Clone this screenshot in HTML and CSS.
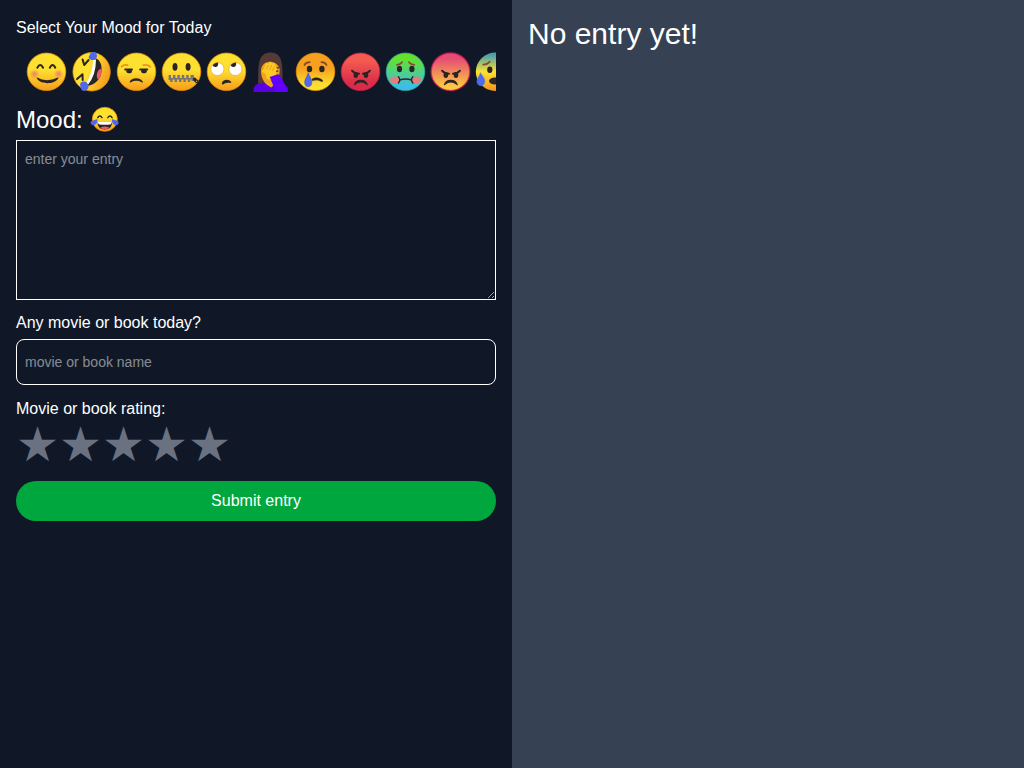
FILE: index.html
```html
<!DOCTYPE html>
<html lang="en">
<head>
<meta charset="utf-8">
<title>Mood Diary</title>
<link rel="stylesheet" href="styles.css">
</head>
<body>
<svg class="defs" aria-hidden="true">
  <defs>
    <linearGradient id="yellow" x1="0" y1="0" x2="0" y2="1"><stop offset=".45" stop-color="#fde030"/><stop offset="1" stop-color="#f79c1c"/></linearGradient>
    <linearGradient id="tilt" x1="0" y1=".2" x2="1" y2=".6"><stop offset=".45" stop-color="#fde030"/><stop offset="1" stop-color="#f39a1e"/></linearGradient>
    <linearGradient id="sad" x1="0" y1="0" x2="0" y2="1"><stop offset=".4" stop-color="#f5a01e"/><stop offset=".85" stop-color="#fde030"/></linearGradient>
    <linearGradient id="red" x1="0" y1="0" x2="0" y2="1"><stop offset=".2" stop-color="#f35b50"/><stop offset=".8" stop-color="#db2b4b"/></linearGradient>
    <linearGradient id="sick" x1="0" y1="0" x2="0" y2="1"><stop offset=".15" stop-color="#62e32b"/><stop offset=".9" stop-color="#3bbdea"/></linearGradient>
    <linearGradient id="angry" x1="0" y1="0" x2="0" y2="1"><stop offset=".15" stop-color="#e64d74"/><stop offset=".9" stop-color="#fcca3f"/></linearGradient>
    <linearGradient id="anxious" x1="0" y1="0" x2="0" y2="1"><stop offset=".05" stop-color="#489eae"/><stop offset=".5" stop-color="#fde030"/><stop offset="1" stop-color="#f7931e"/></linearGradient>
    <radialGradient id="blush"><stop offset=".2" stop-color="#f28b62"/><stop offset="1" stop-color="#f79c4c" stop-opacity="0"/></radialGradient>
    <g id="scowl">
      <g fill="#2c2424"><ellipse cx="17.8" cy="27" rx="2.3" ry="2.9"/><ellipse cx="28" cy="27" rx="2.3" ry="2.9"/></g>
      <path class="line" d="M14 22.7Q16.5 25.6 21 25.8M32 22.7Q29.5 25.6 25 25.8"/>
      <path fill="#2c2424" d="M15.8 37Q17 31.8 22.8 31.8T29.9 37Q29.5 37.7 28.5 36.7Q22.8 32.3 17.2 36.7Q16.2 37.7 15.8 37Z"/>
    </g>
  </defs>
</svg>
<main class="layout">
  <form class="form-panel">
    <label class="label">Select Your Mood for Today</label>
    <div class="moods">
      <svg viewBox="0 0 44.9 48" role="img" aria-label="smiling">
        <ellipse class="rim" cx="22.5" cy="23.8" rx="19.3" ry="18.8" fill="url(#yellow)"/>
        <circle cx="10.5" cy="26" r="5.2" fill="url(#blush)"/><circle cx="34.6" cy="26" r="5.2" fill="url(#blush)"/>
        <path class="line" d="M13.3 19.7Q16.2 14.4 19.1 19.7M25.8 19.7Q28.6 14.4 31.3 19.7"/>
        <path fill="#2c2424" d="M13 29.5Q22.6 34.8 34 29.5Q34.8 29.2 34.3 30.2C30.5 36.8 16.5 36.8 12.8 30.2Q12.3 29.2 13 29.5Z"/>
      </svg>
      <svg viewBox="0 0 44.9 48" role="img" aria-label="rolling on the floor laughing">
        <ellipse class="rim" cx="22.6" cy="23.8" rx="18.7" ry="19.2" fill="url(#tilt)"/>
        <path class="line" d="M13.6 11.5L15.2 17L19.6 12M8 31.1L13.5 26.2L13.7 32"/>
        <path fill="#2c2424" d="M25 10.3C34 11 33.7 24 31 29C28.5 34 23 37.5 18.8 37.7C21 29 24.5 22 25 10.3Z"/>
        <path fill="#fff" d="M24.3 11L27 11.4Q27 28 18.3 37.5L17.2 35.5Q23.5 25 24.3 11Z"/>
        <path fill="#ed5c65" d="M32.2 20.5C28 21.5 26.5 28.8 29 31.5C32 29 33 24 32.2 20.5Z"/>
        <path fill="#4f68ec" d="M26 4.2C29 5.7 28.7 11.7 24.7 12C20.5 12.4 18.4 9.3 20.7 7.2C21.2 4.5 23.5 3.5 26 4.2ZM15.4 33.5C19 34 20.6 38.4 18.7 41C16.6 43.8 12.6 43.4 12.1 40.8L11 36.5C11.5 34 13 33.2 15.4 33.5Z"/>
      </svg>
      <svg viewBox="0 0 44.9 48" role="img" aria-label="unamused">
        <ellipse class="rim" cx="22.5" cy="23.8" rx="19.3" ry="18.8" fill="url(#yellow)"/>
        <path class="brow orange" d="M7.6 18.7Q10 16 13.5 17.2M29.3 17.2Q33.5 16 36.2 18.8"/>
        <path class="line" d="M11.2 21.6H18M26.2 21.6H33.2"/>
        <g fill="#2c2424"><ellipse cx="15.2" cy="23.3" rx="2.8" ry="2"/><ellipse cx="30" cy="23.3" rx="2.8" ry="2"/><path d="M15.6 34C17 28.9 27.3 28.9 28.9 34Q28.6 35.2 27.6 34.2Q22.3 31.3 17 34.2Q15.9 35 15.6 34Z"/></g>
      </svg>
      <svg viewBox="0 0 44.9 48" role="img" aria-label="zipped mouth">
        <ellipse class="rim" cx="22.5" cy="23.8" rx="19.3" ry="18.8" fill="url(#yellow)"/>
        <g fill="#2c2424"><ellipse cx="16" cy="18.8" rx="2.5" ry="3.9"/><ellipse cx="29.1" cy="18.8" rx="2.5" ry="3.9"/></g>
        <path fill="#74747b" d="M9.6 27H12V30H14V27H16.4V30H18.4V27H20.8V30H22.8V27H25.2V30H27.2V27H29.6V30H31.6V27H34.8V33H32.5V31.5H31.2V34H28.8V31.5H26.8V34H24.4V31.5H22.4V34H20V31.5H18V34H15.6V31.5H13.6V34H11.2V32H9.6Z"/>
        <path fill="#2c2424" fill-rule="evenodd" d="M34.2 30.2Q35.8 28.7 37.4 31L39.7 32.5L38.8 36L36.3 34.6L34 32ZM37 32.4V33.6L38 34.2L38.3 33Z"/>
      </svg>
      <svg viewBox="0 0 44.9 48" role="img" aria-label="rolling eyes">
        <ellipse class="rim" cx="22.5" cy="23.8" rx="19.3" ry="18.8" fill="url(#yellow)"/>
        <g fill="#fff" stroke="#eda525" stroke-width=".7"><circle cx="13.4" cy="21" r="6.6"/><circle cx="31.4" cy="21" r="6.6"/></g>
        <path fill="#2c2424" d="M8.6 17A7 7 0 0 1 14.1 14.5Q14.7 18.3 12 18.9Q9.3 19.3 8.6 17ZM26.6 17A7 7 0 0 1 32.1 14.5Q32.7 18.3 30 18.9Q27.3 19.3 26.6 17ZM17.8 35.7C18.5 30.4 26.3 31.2 27.3 34.3Q27 35.4 25.4 34.8Q21.3 34.3 19 36.4Q18 36.7 17.8 35.7Z"/>
      </svg>
      <svg viewBox="0 0 44.9 48" role="img" aria-label="facepalm">
        <path fill="#543b37" d="M10.2 38C10.5 20 8.8 4.5 22.5 4.5S34.5 20 34.5 38Z"/>
        <path fill="#5900e4" d="M5.5 44C5.2 37 9 35.7 15 34.8H29L39.5 39V44Z"/>
        <path fill="#f3a31a" d="M13.2 21C13.8 17 17 14 22 13.8S32 18 31.7 22C31.6 30 28 35.5 23.2 39.5L19.2 37C14.5 33 12.5 27 13.2 21Z"/>
        <path fill="#fdc925" d="M16 20L18 14.7L20.3 16L22 13.6L24.3 15.5L26.5 15L28 19L29.3 20.8L27.5 28L23.5 32L19 31L17.5 26L13.9 23.7Z"/>
        <path stroke="#e8961c" stroke-width=".8" fill="none" d="M20.2 17L18.5 21M23.8 17L21.5 22M26.6 18.5L24.2 23"/>
        <path fill="#543b37" d="M28.6 19.3L31.3 18.9V20.3L28.9 20.8ZM28 22.7L30.3 22.2V23.7L28.2 24.1Z"/>
        <path fill="#6200ff" d="M21.7 29L29.8 26.2Q31.3 26.2 32 28L39.6 41V44H28L24.3 35.2Z"/>
      </svg>
      <svg viewBox="0 0 44.9 48" role="img" aria-label="crying">
        <ellipse class="rim" cx="22.5" cy="23.8" rx="19.3" ry="18.8" fill="url(#sad)"/>
        <g fill="#2c2424"><ellipse cx="16.5" cy="21" rx="2.7" ry="3.3"/><ellipse cx="28.9" cy="21" rx="2.7" ry="3.3"/><path d="M18.7 31.5C21 28.2 28.5 29.4 30.1 33Q29.5 34.2 28 33.4Q24.5 31.4 19.5 32.7Q18.4 32.8 18.7 31.5Z"/></g>
        <path class="brow" d="M11.5 17Q12.5 14.5 16.6 14.2M28.5 14.2Q32.5 14.5 33.5 17"/>
        <path fill="#4f68ec" stroke="#3952ca" stroke-width=".5" d="M15.2 24.7C16.5 28.5 19 31 18.9 34.5C18.8 37.5 17 38.7 15.2 38.7S11.7 37.5 11.6 34.5C11.6 31 14.2 28.5 15.2 24.7Z"/>
      </svg>
      <svg viewBox="0 0 44.9 48" role="img" aria-label="furious">
        <ellipse class="rim crimson" cx="22.5" cy="23.8" rx="19.3" ry="18.8" fill="url(#red)"/><use href="#scowl"/>
      </svg>
      <svg viewBox="0 0 44.9 48" role="img" aria-label="nauseated">
        <ellipse class="rim teal" cx="22.5" cy="23.8" rx="19.3" ry="18.8" fill="url(#sick)"/>
        <g fill="#2c2424"><ellipse cx="16.5" cy="21" rx="2.6" ry="3.3"/><ellipse cx="28.9" cy="21" rx="2.6" ry="3.3"/></g>
        <path class="brow" d="M14 16.8Q17.5 16.3 19 14.2M26 14.2Q27.5 16.3 31.2 16.8"/>
        <g fill="#e37f7b"><ellipse cx="11.7" cy="32" rx="4.9" ry="3.5"/><ellipse cx="33.5" cy="32" rx="4.9" ry="3.5"/></g>
        <path class="line thin" d="M15.4 28.7Q18.3 31.5 15.4 35M29.9 28.7Q27 31.5 29.9 35M16.7 32Q22.7 30.1 28.7 32"/>
      </svg>
      <svg viewBox="0 0 44.9 48" role="img" aria-label="angry">
        <ellipse class="rim pink" cx="22.5" cy="23.8" rx="19.3" ry="18.8" fill="url(#angry)"/><use href="#scowl"/>
      </svg>
      <svg viewBox="0 0 44.9 48" role="img" aria-label="anxious">
        <ellipse cx="22.5" cy="23.8" rx="19.7" ry="19.2" fill="url(#anxious)"/>
        <path class="brow" d="M10.3 16.6Q14.5 16.3 16.6 13.8"/>
        <ellipse cx="16.8" cy="21.8" rx="2.6" ry="3.3" fill="#2c2424"/>
        <ellipse cx="22" cy="33" rx="6" ry="3.5" fill="#2c2424"/>
        <path fill="#4f68ec" stroke="#3f80d0" stroke-width=".5" d="M7.5 24.7C9.3 28 12 30.2 11.8 33.5C11.6 36.5 9.7 37.7 7.9 37.7S4 36.5 3.9 33.5C3.9 30.5 6.7 28 7.5 24.7Z"/>
      </svg>
    </div>
    <h2 class="mood">Mood:
      <svg class="current" viewBox="0 0 30 28" role="img" aria-label="tears of joy">
        <ellipse class="rim" cx="14.8" cy="14.3" rx="12.5" ry="12" fill="url(#yellow)"/>
        <path class="line thin" d="M7.7 12.7Q9.8 9.2 12 12.7M17.8 12.7Q20 9.2 22.1 12.7"/>
        <path fill="#2c2424" d="M7.6 17.2Q14.8 18.5 22 17.2C22 22 19 24.4 14.8 24.4S7.6 22 7.6 17.2Z"/>
        <path fill="#fff" d="M7.8 17.1H21.8L21 19.3Q14.8 20.3 8.6 19.3Z"/>
        <path fill="#ed5c65" d="M10.2 22.8Q14.8 20.3 19.4 22.8Q14.8 25.8 10.2 22.8Z"/>
        <path fill="#4f68ec" d="M7.2 13.9C7.9 17 6.2 20.4 3 20.2C.3 20-.1 17 1.7 15.9ZM22.1 13.9C21.4 17 23.1 20.4 26.3 20.2C29 20 29.4 17 27.6 15.9Z"/>
      </svg>
    </h2>
    <textarea class="entry" placeholder="enter your entry"></textarea>
    <label class="label media-label">Any movie or book today?</label>
    <input class="media" type="text" placeholder="movie or book name">
    <label class="label rating-label">Movie or book rating:</label>
    <div class="stars"><span>★</span><span>★</span><span>★</span><span>★</span><span>★</span></div>
    <button class="submit" type="button">Submit entry</button>
  </form>
  <section class="entries"><h1 class="empty">No entry yet!</h1></section>
</main>
</body>
</html>
```

FILE: styles.css
```css
* { box-sizing: border-box; margin: 0; padding: 0; }
body { font: 16px/24px "Liberation Sans", Arial, sans-serif; color: #fff; }
.defs { position: absolute; width: 0; height: 0; }
.layout { display: grid; grid-template-columns: 1fr 1fr; height: 100vh; }
.form-panel { display: flex; flex-direction: column; min-width: 0; padding: 16px; background: #101828; }
.entries { padding: 16px; background: #364153; }
.moods { display: flex; height: 48px; margin-top: 8px; padding-left: 8px; overflow: hidden; }
.moods svg { flex: none; width: 44.9px; height: 48px; }
.rim { stroke: #eb8f00; stroke-opacity: .75; stroke-width: 1; }
.rim.crimson { stroke: #c91f4c; }
.rim.teal { stroke: #31a6a3; }
.rim.pink { stroke: #d81b60; stroke-width: 1.4; }
.line { fill: none; stroke: #2c2424; stroke-width: 2; stroke-linecap: round; stroke-linejoin: round; }
.line.thin { stroke-width: 1.4; }
.brow { fill: none; stroke: #854a32; stroke-width: 1.8; stroke-linecap: round; }
.brow.orange { stroke: #ed951b; }
.mood { display: flex; gap: 7px; height: 32px; margin-top: 8px; font-size: 24px; font-weight: 400; line-height: 32px; }
.current { width: 30px; height: 28px; margin-top: 1px; }
.entry { height: 160px; margin-top: 4px; padding: 8px; border: 1px solid #fff; background: transparent; color: #fff; font: 14px/20px "Liberation Sans", Arial, sans-serif; }
.entry::placeholder, .media::placeholder { color: rgba(255, 255, 255, 0.5); }
.media-label { margin-top: 11px; }
.media { height: 46px; margin-top: 4px; padding: 8px; border: 1px solid #fff; border-radius: 8px; background: transparent; color: #fff; font: 14px/20px "Liberation Sans", Arial, sans-serif; }
.rating-label { margin-top: 12px; }
.stars { display: flex; height: 48px; color: #6a7282; font-size: 48px; line-height: 48px; }
.submit { height: 40px; margin-top: 12px; border: 0; border-radius: 20px; background: #00a63e; color: #fff; font: 16px/24px "Liberation Sans", Arial, sans-serif; }
.empty { font-size: 30px; font-weight: 400; line-height: 36px; }
```
